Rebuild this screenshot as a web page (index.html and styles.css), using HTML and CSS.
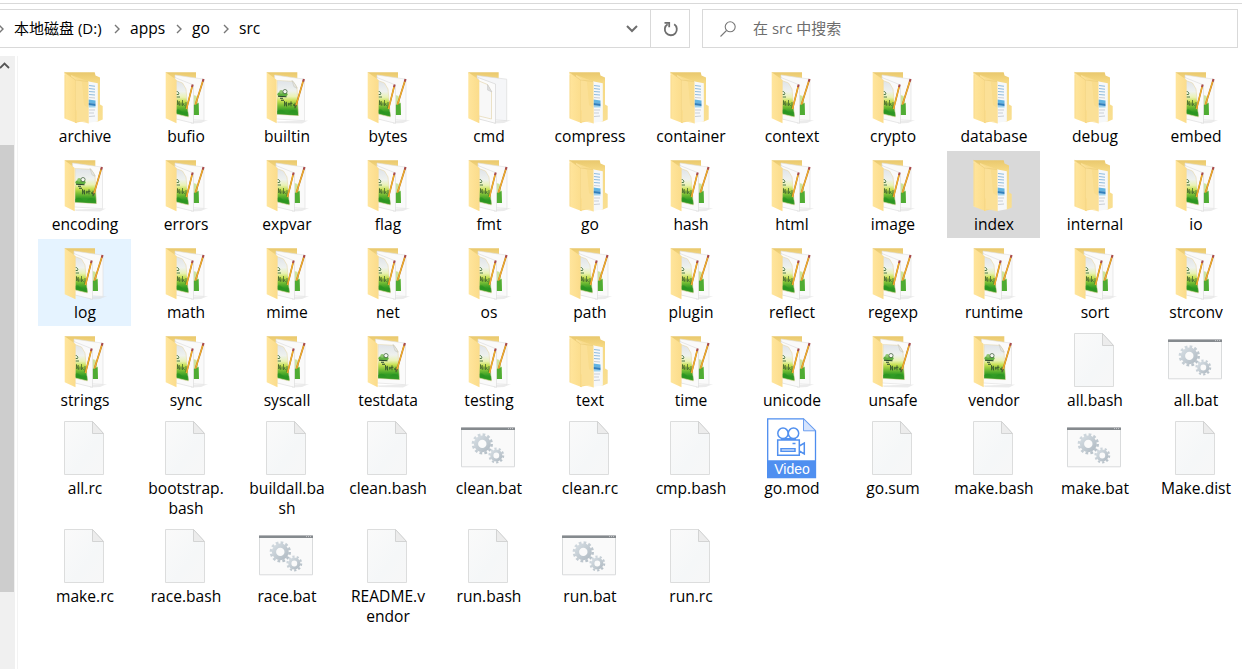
FILE: index.html
```html
<!DOCTYPE html>
<html lang="zh-CN">
<head>
<meta charset="utf-8">
<title>src</title>
<link rel="stylesheet" href="styles.css">
</head>
<body>
<svg class="defs" width="0" height="0" aria-hidden="true">
  <defs>
    <linearGradient id="gCover" x1="0" x2="1" y1="0" y2="0"><stop offset="0" stop-color="#ffe59c"/><stop offset="1" stop-color="#fbdc8b"/></linearGradient>
    <linearGradient id="gBack" x1="0" x2="0" y1="0" y2="1"><stop offset="0" stop-color="#e9c86d"/><stop offset=".2" stop-color="#f6d983"/><stop offset="1" stop-color="#f9df92"/></linearGradient>
    <linearGradient id="gPic" x1="0" x2="0" y1="0" y2="1"><stop offset="0" stop-color="#dfe3e8"/><stop offset=".3" stop-color="#eef1ee"/><stop offset=".46" stop-color="#eaf2b4"/><stop offset=".58" stop-color="#c5e050"/><stop offset=".72" stop-color="#74bc34"/><stop offset=".86" stop-color="#2f9a24"/><stop offset="1" stop-color="#43a52a"/></linearGradient>
    <linearGradient id="gDoc" x1="0" x2="1" y1="0" y2="1"><stop offset="0" stop-color="#fafafa"/><stop offset=".6" stop-color="#f5f7f8"/><stop offset="1" stop-color="#f7f7f7"/></linearGradient>
    <linearGradient id="gGear" x1="0" x2="1" y1="0" y2="1"><stop offset="0" stop-color="#d3dbe1"/><stop offset="1" stop-color="#b3bdc5"/></linearGradient>
    <symbol id="folders" viewBox="0 0 93 64">
      <path d="M26.500 9.300H56.700L57.500 12.500 62 14.500V41.500L64.700 43V56.500L60 58.500 37 56z" fill="url(#gBack)"/>
      <path d="M49.500 18.300 59.800 20.300V58.300L50 60z" fill="#f6f8fa"/>
      <path d="M51 22.500 57 23.300M51 25.500 57 26.200M51 28.500 57 29M51 31.500 57 32" stroke="#8fbbdd" stroke-width="1.100"/>
      <path d="M51 34.500 57 35M51 47 57 47M51 50 56 50M51 53.500 57 53" stroke="#c9ced5" stroke-width="1"/>
      <path d="M50.500 36.500 57.500 37.500V40.500L50.500 40z" fill="#62b4e2"/><path d="M50.500 40 57.500 40.500V43L50.500 42.600z" fill="#2f7fbd"/><path d="M50.500 42.600 57.500 43V44.500H50.500z" fill="#9fd3ef"/>
      <path d="M33 12 50.500 18.500V60.500L46 58 37 60z" fill="#f9dc8c"/>
      <path d="M33 12 44 19 46 42 50.500 45V60.500L38 57.500z" fill="#fbe19a" opacity=".8"/>
      <path d="M26.500 9.300 37.500 17V46L39 48V60.300L26.500 55.500z" fill="url(#gCover)"/>
      <path d="M26.500 9.300 37.500 17 50 18.500" fill="none" stroke="#e9ca76" stroke-width=".6"/>
      <path d="M37.500 17V60M27 12V55" stroke="#edcf7e" stroke-width=".5" opacity=".7"/>
    </symbol>
    <symbol id="note" viewBox="0 0 22 36">
      <path d="M0 0 16 1Q18 4 20 7L21.500 35.500 0 34z" fill="url(#gPic)" stroke="#e7d9aa" stroke-width=".6"/>
      <path d="M15 0Q19 4 20 8L17 6.500z" fill="#e6e6df" stroke="#b8b8ad" stroke-width=".4"/>
      <ellipse cx="5.500" cy="14" rx="5" ry="2.600" fill="#5faf3f"/>
      <circle cx="4.200" cy="11.500" r="1.900" fill="#8dc56e"/><circle cx="8" cy="11.300" r="2.100" fill="#f6f9f2" stroke="#4c6a4a" stroke-width=".8"/>
      <path d="M1 16 9.500 16.500M3 18 6 18M4 20 7 20" stroke="#29452e" stroke-width="1.100"/>
      <path d="M7.500 26V21L9.500 26V21.500M11.500 25Q10.500 22 12.500 23T11.500 25M14 21V26M13 23H15.500M16.500 24Q16 26 18 25V22.500M18 24V28" fill="none" stroke="#2d4f2b" stroke-width=".8"/>
      <path d="M0 31Q4 28 7 31T13 31 21 32V35L0 34z" fill="#278f20" opacity=".5"/>
    </symbol>
    <symbol id="single" viewBox="0 0 93 64">
      <path d="M36 58.500 68 57.500 62 60.500 38 60z" fill="#dedede" opacity=".6"/>
      <path d="M26.700 9.300H57.300V30L37 50z" fill="url(#gBack)"/>
      <path d="M34.500 12 64.500 16.200V57.700L36 56z" fill="#fbfbfb" stroke="#dedede" stroke-width=".6"/>
      <use href="#note" x="37" y="17.300" width="22" height="36"/>
      <path d="M63.300 17.700 56 42.500" stroke="#b8742c" stroke-width="1.700"/><path d="M63 18.700 56 42.500" stroke="#f4b22b" stroke-width="1.100"/>
      <path d="M63.900 16 63.200 18.500" stroke="#a94a4b" stroke-width="2.100"/><path d="M56.400 42 55.400 44.500" stroke="#4b4435" stroke-width=".8"/>
      <path d="M26.700 9.300 36.700 17V60.300L26.700 55.300z" fill="url(#gCover)"/>
    </symbol>
    <symbol id="double" viewBox="0 0 93 64">
      <path d="M52 58 69 57 62 60 52 60.500z" fill="#dedede" opacity=".6"/>
      <path d="M26.700 9.300H57V30L38 50z" fill="url(#gBack)"/>
      <path d="M36 12 65 16.200V57.400L38 56z" fill="#fafafa" stroke="#dedede" stroke-width=".6"/>
      <path d="M54.500 32 57.500 33 59.500 40 60 52H54.500z" fill="#cfe49a"/><path d="M54.500 42 59.600 40 60 52H54.500z" fill="#4fac33"/>
      <path d="M64 17.700 56.500 41.500" stroke="#b8742c" stroke-width="1.700"/><path d="M63.700 18.700 56.500 41.500" stroke="#f4b22b" stroke-width="1.100"/>
      <path d="M64.500 16 63.800 18.500" stroke="#a94a4b" stroke-width="2.100"/>
      <path d="M36 14.500 54.500 22V60.300L37 56z" fill="#fafafa" stroke="#d8d8d8" stroke-width=".6"/>
      <path d="M37 17.500 43.500 20 47 26 49.500 54 37 51z" fill="url(#gPic)" stroke="#e7d9aa" stroke-width=".6"/>
      <path d="M37.500 28.500A2 2 0 0 1 39.500 31.500H37.500M37.500 34H41" fill="none" stroke="#4f7947" stroke-width="1"/>
      <path d="M38.500 42V37.500L40.300 42.500V38M42 39.500V42.500M43.500 37V43M45 40Q43.500 42.500 45.800 42.500M47 39V45" fill="none" stroke="#33562b" stroke-width=".7"/>
      <path d="M37 47Q40 45 42 48T49 49L49.500 53 37 50z" fill="#278f20" opacity=".6"/>
      <path d="M53.300 23 47.500 46" stroke="#b8742c" stroke-width="1.600"/><path d="M53 24 47.500 46" stroke="#f4b22b" stroke-width="1.100"/>
      <path d="M53.700 21.500 53 24" stroke="#a94a4b" stroke-width="2"/>
      <path d="M26.700 9.300 37.500 17V60.300L26.700 55.300z" fill="url(#gCover)"/>
    </symbol>
    <symbol id="blank" viewBox="0 0 93 64">
      <path d="M52 58 69 57 62 60 52 60.500z" fill="#dedede" opacity=".6"/>
      <path d="M26.300 9.300H56.700V30L38 50z" fill="url(#gBack)"/>
      <path d="M35 12.500 64.700 16.200V57.600L38 56z" fill="#f5f6f8" stroke="#d8d8d8" stroke-width=".6"/>
      <path d="M36 14.500 53.500 21V60.300L37 56z" fill="#fbfbfb" stroke="#d5d5d5" stroke-width=".7"/>
      <path d="M37 18 45.500 21.500 49.500 29V56L37 53" fill="#f8f8f8" stroke="#e5d7b0" stroke-width=".7"/>
      <path d="M45.500 21.500 50 29 45.500 27z" fill="#ddd" stroke="#c5c5c5" stroke-width=".5"/>
      <path d="M26.300 9.300 37.300 17V60.300L26.300 55.300z" fill="url(#gCover)"/>
    </symbol>
    <symbol id="doc" viewBox="0 0 93 64">
      <path d="M26.500 6.500H54.500L65.500 18.500V59.500H26.500z" fill="url(#gDoc)" stroke="#dcdddd"/>
      <path d="M54.500 6.500V18.500H65.500z" fill="#ececec" stroke="#cfd0d0" stroke-width=".9"/>
    </symbol>
    <symbol id="bat" viewBox="0 0 93 64">
      <path d="M19.500 12.800H72.500V51.800H19.500z" fill="#fafafa" stroke="#d9dbdc"/>
      <path d="M19 12.600H73V14.900H19z" fill="#858a8e"/>
      <path d="M66 13.600H67M68 13.600H69M70 13.600H71" stroke="#d5d7d9" stroke-width=".8"/>
      <g fill="none" stroke="url(#gGear)">
        <circle cx="40.300" cy="28.900" r="6.300" stroke-width="4.200"/>
        <circle cx="40.300" cy="28.900" r="9.300" stroke-width="2.700" stroke-dasharray="2.700 2.170"/>
        <circle cx="54.300" cy="40.500" r="4.500" stroke-width="3.200"/>
        <circle cx="54.300" cy="40.500" r="6.800" stroke-width="2.300" stroke-dasharray="2.200 2.073"/>
      </g>
    </symbol>
    <symbol id="video" viewBox="0 0 93 64">
      <path d="M22.700 3.800H58.500L70.500 15.800V62.500H22.700z" fill="#fff" stroke="#4d8def" stroke-width="1.300"/>
      <path d="M58.500 3.800V15.800H70.500z" fill="#d5e4fd" stroke="#6c9ff0"/>
      <path d="M22 45.300H71V63H22z" fill="#4f8ff0"/>
      <g fill="none" stroke="#5190ef" stroke-width="1.500">
        <circle cx="38" cy="18.300" r="5.200"/><circle cx="48.500" cy="18.300" r="5.200"/>
        <path d="M36 23.800H51M32.700 25H54.300V40.300H32.700zM54.300 31 59.300 28V39L54.300 36M36 33.800H50V36.200H36zM47.500 28.500H50.500"/>
      </g>
      <text x="47" y="59" text-anchor="middle" fill="#fff" class="video-text">Video</text>
    </symbol>
  </defs>
</svg>
<div class="window">
  <header class="toolbar">
    <div class="address">
      <div class="crumbs">
        <svg class="sep first" viewBox="0 0 6 10"><path d="M1 1 5 5 1 9"/></svg>
        <span class="crumb drive">本地磁盘 (D:)</span>
        <svg class="sep" viewBox="0 0 6 10"><path d="M1 1 5 5 1 9"/></svg>
        <span class="crumb apps">apps</span>
        <svg class="sep" viewBox="0 0 6 10"><path d="M1 1 5 5 1 9"/></svg>
        <span class="crumb go">go</span>
        <svg class="sep" viewBox="0 0 6 10"><path d="M1 1 5 5 1 9"/></svg>
        <span class="crumb">src</span>
      </div>
      <svg class="chevron" viewBox="0 0 12 8"><path d="M1 1 6 6 11 1"/></svg>
      <div class="refresh"><svg viewBox="0 0 16 16"><path d="M11.200 3.300A6 6 0 1 1 4.600 3.200M1.500 1.800H6.200V6.300"/></svg></div>
    </div>
    <div class="search">
      <svg viewBox="0 0 16 16"><circle cx="10.200" cy="5.800" r="5"/><path d="M6.500 9.500 .5 15.500"/></svg>
      <span>在 src 中搜索</span>
    </div>
  </header>
  <main class="content">
    <div class="scrollbar">
      <svg class="up" viewBox="0 0 10 7"><path d="M0 6 4.500 1.500 9 6"/></svg>
      <div class="thumb"></div>
    </div>
    <div class="files">
      <div class="file"><svg><use href="#folders"/></svg><span>archive</span></div>
      <div class="file"><svg><use href="#double"/></svg><span>bufio</span></div>
      <div class="file"><svg><use href="#single"/></svg><span>builtin</span></div>
      <div class="file"><svg><use href="#double"/></svg><span>bytes</span></div>
      <div class="file"><svg><use href="#blank"/></svg><span>cmd</span></div>
      <div class="file"><svg><use href="#folders"/></svg><span>compress</span></div>
      <div class="file"><svg><use href="#folders"/></svg><span>container</span></div>
      <div class="file"><svg><use href="#double"/></svg><span>context</span></div>
      <div class="file"><svg><use href="#double"/></svg><span>crypto</span></div>
      <div class="file"><svg><use href="#folders"/></svg><span>database</span></div>
      <div class="file"><svg><use href="#folders"/></svg><span>debug</span></div>
      <div class="file"><svg><use href="#double"/></svg><span>embed</span></div>

      <div class="file"><svg><use href="#single"/></svg><span>encoding</span></div>
      <div class="file"><svg><use href="#double"/></svg><span>errors</span></div>
      <div class="file"><svg><use href="#double"/></svg><span>expvar</span></div>
      <div class="file"><svg><use href="#double"/></svg><span>flag</span></div>
      <div class="file"><svg><use href="#double"/></svg><span>fmt</span></div>
      <div class="file"><svg><use href="#folders"/></svg><span>go</span></div>
      <div class="file"><svg><use href="#double"/></svg><span>hash</span></div>
      <div class="file"><svg><use href="#double"/></svg><span>html</span></div>
      <div class="file"><svg><use href="#double"/></svg><span>image</span></div>
      <div class="file selected"><svg><use href="#folders"/></svg><span>index</span></div>
      <div class="file"><svg><use href="#folders"/></svg><span>internal</span></div>
      <div class="file"><svg><use href="#double"/></svg><span>io</span></div>

      <div class="file hover"><svg><use href="#double"/></svg><span>log</span></div>
      <div class="file"><svg><use href="#double"/></svg><span>math</span></div>
      <div class="file"><svg><use href="#double"/></svg><span>mime</span></div>
      <div class="file"><svg><use href="#double"/></svg><span>net</span></div>
      <div class="file"><svg><use href="#double"/></svg><span>os</span></div>
      <div class="file"><svg><use href="#double"/></svg><span>path</span></div>
      <div class="file"><svg><use href="#double"/></svg><span>plugin</span></div>
      <div class="file"><svg><use href="#double"/></svg><span>reflect</span></div>
      <div class="file"><svg><use href="#double"/></svg><span>regexp</span></div>
      <div class="file"><svg><use href="#double"/></svg><span>runtime</span></div>
      <div class="file"><svg><use href="#double"/></svg><span>sort</span></div>
      <div class="file"><svg><use href="#double"/></svg><span>strconv</span></div>

      <div class="file"><svg><use href="#double"/></svg><span>strings</span></div>
      <div class="file"><svg><use href="#double"/></svg><span>sync</span></div>
      <div class="file"><svg><use href="#double"/></svg><span>syscall</span></div>
      <div class="file"><svg><use href="#single"/></svg><span>testdata</span></div>
      <div class="file"><svg><use href="#double"/></svg><span>testing</span></div>
      <div class="file"><svg><use href="#folders"/></svg><span>text</span></div>
      <div class="file"><svg><use href="#double"/></svg><span>time</span></div>
      <div class="file"><svg><use href="#double"/></svg><span>unicode</span></div>
      <div class="file"><svg><use href="#single"/></svg><span>unsafe</span></div>
      <div class="file"><svg><use href="#single"/></svg><span>vendor</span></div>
      <div class="file"><svg><use href="#doc"/></svg><span>all.bash</span></div>
      <div class="file"><svg><use href="#bat"/></svg><span>all.bat</span></div>

      <div class="file"><svg><use href="#doc"/></svg><span>all.rc</span></div>
      <div class="file"><svg><use href="#doc"/></svg><span>bootstrap.<br>bash</span></div>
      <div class="file"><svg><use href="#doc"/></svg><span>buildall.ba<br>sh</span></div>
      <div class="file"><svg><use href="#doc"/></svg><span>clean.bash</span></div>
      <div class="file"><svg><use href="#bat"/></svg><span>clean.bat</span></div>
      <div class="file"><svg><use href="#doc"/></svg><span>clean.rc</span></div>
      <div class="file"><svg><use href="#doc"/></svg><span>cmp.bash</span></div>
      <div class="file"><svg><use href="#video"/></svg><span>go.mod</span></div>
      <div class="file"><svg><use href="#doc"/></svg><span>go.sum</span></div>
      <div class="file"><svg><use href="#doc"/></svg><span>make.bash</span></div>
      <div class="file"><svg><use href="#bat"/></svg><span>make.bat</span></div>
      <div class="file"><svg><use href="#doc"/></svg><span>Make.dist</span></div>

      <div class="file"><svg><use href="#doc"/></svg><span>make.rc</span></div>
      <div class="file"><svg><use href="#doc"/></svg><span>race.bash</span></div>
      <div class="file"><svg><use href="#bat"/></svg><span>race.bat</span></div>
      <div class="file"><svg><use href="#doc"/></svg><span>README.v<br>endor</span></div>
      <div class="file"><svg><use href="#doc"/></svg><span>run.bash</span></div>
      <div class="file"><svg><use href="#bat"/></svg><span>run.bat</span></div>
      <div class="file"><svg><use href="#doc"/></svg><span>run.rc</span></div>
    </div>
  </main>
</div>
</body>
</html>
```
FILE: styles.css
```css
* { box-sizing: border-box; }
body {
  margin: 0;
  background: #fff;
  color: #000;
  font: 15.6px/20px "Open Sans", "Noto Sans CJK SC", sans-serif;
  overflow: hidden;
}
.defs { display: block; }
.window {
  display: flex;
  flex-direction: column;
  width: 1242px;
  height: 669px;
  padding-top: 3px;
}
.toolbar {
  display: flex;
  gap: 12px;
  height: 53px;
  padding: 5px 4px 8px 0;
  border-top: 1px solid #d9d9d9;
  flex: none;
}
.address {
  display: flex;
  align-items: center;
  width: 690px;
  border: 1px solid #d9d9d9;
  border-left: 0;
}
.crumbs { display: flex; align-items: center; flex: 1; }
.crumb { white-space: nowrap; padding-bottom: 1px; }
.drive { width: 100px; font-size: 15px; }
.apps { width: 46px; }
.go { width: 31px; }
.sep {
  width: 6px;
  height: 10px;
  margin-right: 10px;
  fill: none;
  stroke: #777;
  stroke-width: 1.4;
  flex: none;
}
.sep.first { margin-left: -2px; }
.chevron { width: 12px; height: 8px; margin-right: 12px; fill: none; stroke: #6e6e6e; stroke-width: 2; }
.refresh {
  display: flex;
  align-items: center;
  justify-content: center;
  width: 39px;
  height: 100%;
  padding-left: 2px;
  border-left: 1px solid #d9d9d9;
}
.refresh svg { width: 16px; height: 16px; fill: none; stroke: #6e6e6e; stroke-width: 1.8; }
.search {
  display: flex;
  align-items: center;
  gap: 17px;
  flex: 1;
  padding-left: 17px;
  border: 1px solid #d9d9d9;
  color: #6d6d6d;
  font-size: 15px;
}
.search svg { width: 16px; height: 16px; fill: none; stroke: #777; stroke-width: 1.1; }
.search span { padding-bottom: 2px; }
.content { display: flex; flex: 1; }
.scrollbar {
  width: 15px;
  background: #f0f0f0;
  flex: none;
}
.up { display: block; width: 10px; height: 7px; margin: 6px 0 76px; fill: none; stroke: #555; stroke-width: 1.8; }
.thumb { width: 14px; height: 447px; background: #cdcdcd; }
.files {
  display: grid;
  grid-template-columns: repeat(12, 93px);
  grid-auto-rows: minmax(87px, auto);
  column-gap: 8px;
  row-gap: 1px;
  align-content: start;
  margin-left: 2px;
  padding: 7px 0 0 20px;
  border-left: 1px solid #f3f3f3;
}
.file { padding-bottom: 4px; text-align: center; }
.file > svg { display: block; width: 93px; height: 64px; }
.file > span { display: block; margin-top: -1px; padding-left: 1px; white-space: nowrap; }
.selected { background: #d9d9d9; }
.hover { background: #e5f3ff; }
.video-text { font: 14px "Liberation Sans", sans-serif; }
```
